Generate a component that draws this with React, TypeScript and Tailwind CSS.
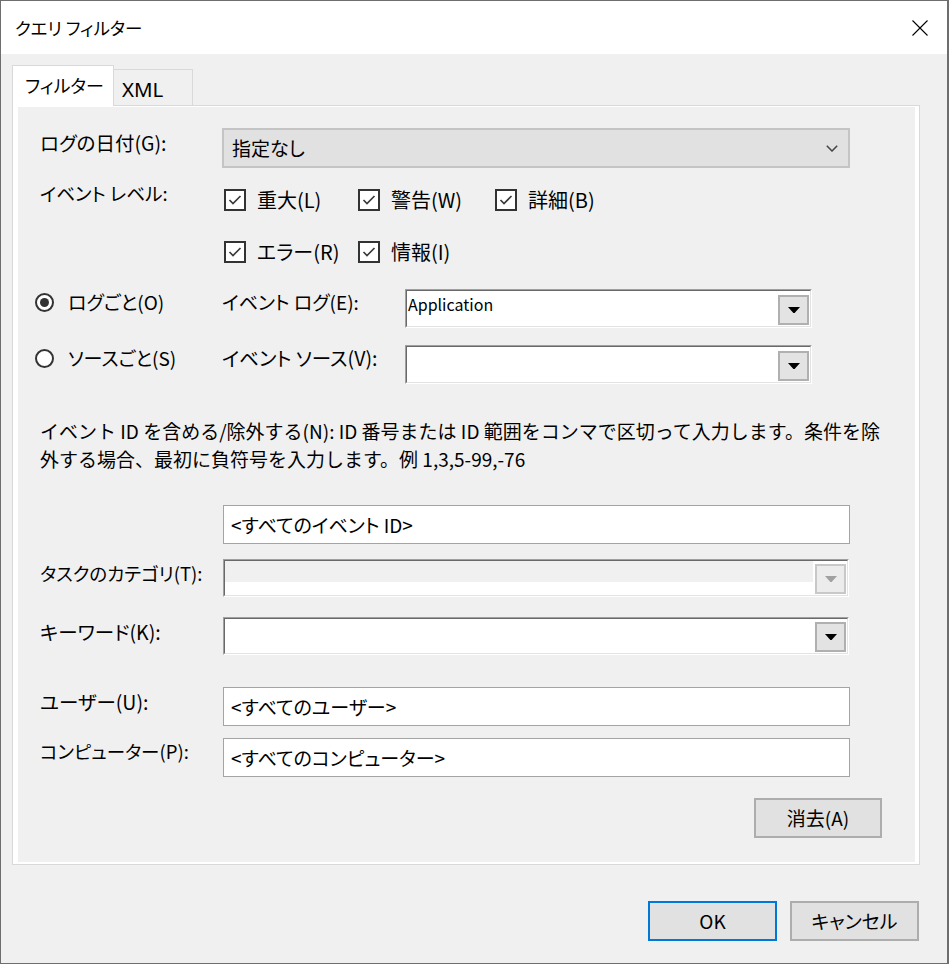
import React from "react";

const JP = "font-['Noto_Sans_CJK_JP',sans-serif] [font-feature-settings:'palt']";

function Arrow({ color }: { color: string }) {
  return (
    <svg width="12" height="6" viewBox="0 0 12 6">
      <polygon points="0,0 12,0 6.6,6 5.4,6" fill={color} />
    </svg>
  );
}

function Check({ label, className }: { label: string; className?: string }) {
  return (
    <div className={`flex items-center h-[24px] ${className ?? ""}`}>
      <div className="w-[22px] h-[22px] border-2 border-[#333333] bg-white flex items-center justify-center">
        <svg width="16" height="14" viewBox="0 0 16 14">
          <path d="M2.5 7 L6 10.5 L13.5 3" fill="none" stroke="#3a3a3a" strokeWidth="1.7" />
        </svg>
      </div>
      <span className="ml-[11px] text-[20px] leading-[24px] text-black whitespace-nowrap">{label}</span>
    </div>
  );
}

function Radio({ label, checked }: { label: string; checked?: boolean }) {
  return (
    <div className="flex items-center h-[26px] w-[187px] ml-[-5px]">
      <div className="w-[19px] h-[19px] rounded-full border-2 border-[#333333] bg-white flex items-center justify-center">
        {checked && <div className="w-[9px] h-[9px] rounded-full bg-[#333333]" />}
      </div>
      <span className="ml-[14px] text-[19px] leading-[26px] text-black whitespace-nowrap">{label}</span>
    </div>
  );
}

function ClassicCombo({
  value,
  className,
  disabled,
}: {
  value?: string;
  className?: string;
  disabled?: boolean;
}) {
  return (
    <div
      className={`border border-t-[#a0a0a0] border-l-[#a0a0a0] border-r-[#ffffff] border-b-[#ffffff] ${className ?? ""}`}
    >
      <div className="h-full border border-t-[#696969] border-l-[#696969] border-r-[#e3e3e3] border-b-[#e3e3e3] bg-white flex">
        <div className="flex-1 flex flex-col">
          {disabled ? (
            <div className="h-[21px] bg-[#f0f0f0] mr-[2px]" />
          ) : (
            <span className="mt-[2px] pl-[1px] text-[16px] leading-[22px] text-black font-['Noto_Sans_CJK_JP',sans-serif]">
              {value}
            </span>
          )}
        </div>
        <div className="flex items-end pb-[1px] pr-[1px]">
          <div
            className={`w-[31px] h-[30px] border-2 flex items-center justify-center ${
              disabled ? "border-[#c8c8c8] bg-[#ececec]" : "border-[#b0b0b0] bg-[#e3e3e3]"
            }`}
          >
            <Arrow color={disabled ? "#a0a0a0" : "#000000"} />
          </div>
        </div>
      </div>
    </div>
  );
}

function TextBox({ value }: { value: string }) {
  return (
    <div className="ml-[1px] w-[627px] h-[39px] border border-[#a4a4a4] bg-white flex items-center pl-[7px]">
      <span className="text-[19px] leading-[24px] text-black whitespace-nowrap">{value}</span>
    </div>
  );
}

function Btn({ label, primary, className }: { label: string; primary?: boolean; className?: string }) {
  return (
    <div
      className={`h-[40px] flex items-center justify-center bg-[#e1e1e1] border-2 ${
        primary ? "border-[#0078d7]" : "border-[#adadad]"
      } ${className ?? ""}`}
    >
      <span className="text-[19px] leading-[24px] text-black">{label}</span>
    </div>
  );
}

export default function App() {
  return (
    <div
      className={`w-[949px] h-[964px] border-l border-t border-b border-r-2 border-[#6e6e6e] bg-[#f0f0f0] flex flex-col ${JP}`}
    >
      {/* title bar */}
      <div className="h-[53px] bg-white flex items-center justify-between pl-[14px] pr-[19px]">
        <span className="text-[17.5px] leading-[24px] text-black">クエリ フィルター</span>
        <svg width="16" height="16" viewBox="0 0 16 16">
          <path d="M0.5 0.5 L15.5 15.5 M15.5 0.5 L0.5 15.5" stroke="#000" strokeWidth="1.1" />
        </svg>
      </div>

      {/* tabs */}
      <div className="mt-[11px] pl-[11px] flex items-end relative z-10">
        <div className="w-[102px] h-[41px] bg-white border border-b-0 border-[#d9d9d9] mb-[-1px] flex items-start pt-[7px] pl-[12px]">
          <span className="text-[18px] leading-[24px] text-black">フィルター</span>
        </div>
        <div className="w-[79px] h-[36px] bg-[#f0f0f0] border border-l-0 border-b-0 border-[#d9d9d9] flex items-start pt-[6px] pl-[8px]">
          <span className="text-[20.5px] leading-[26px] text-black font-['Noto_Sans',sans-serif]">XML</span>
        </div>
      </div>

      {/* panel */}
      <div className="ml-[11px] w-[908px] h-[760px] border border-[#d9d9d9] bg-white pl-[5px] pr-[4px] pt-[1px] pb-[2px]">
        <div className="h-full bg-[#f0f0f0] pl-[22px] flex flex-col text-black">
          {/* log date */}
          <div className="mt-[21px] flex items-start h-[40px]">
            <span className="w-[182px] mt-[3px] text-[19.5px] leading-[24px]">ログの日付(G):</span>
            <div className="w-[628px] h-[40px] border-2 border-[#c4c4c4] bg-[#e1e1e1] flex items-center justify-between pl-[8px] pr-[10px]">
              <span className="text-[19px] leading-[24px]">指定なし</span>
              <svg width="12" height="7" viewBox="0 0 12 7">
                <path d="M0.8 0.8 L6 6 L11.2 0.8" fill="none" stroke="#444" strokeWidth="1.5" />
              </svg>
            </div>
          </div>

          {/* event level */}
          <div className="mt-[13px] flex items-start">
            <span className="w-[184px] text-[18.5px] leading-[24px]">イベント レベル:</span>
            <div className="pt-[7px] flex flex-col">
              <div className="flex">
                <Check label="重大(L)" className="w-[134px]" />
                <Check label="警告(W)" className="w-[137px]" />
                <Check label="詳細(B)" />
              </div>
              <div className="flex mt-[28px]">
                <Check label="エラー(R)" className="w-[134px]" />
                <Check label="情報(I)" />
              </div>
            </div>
          </div>

          {/* by log */}
          <div className="mt-[25px] flex items-start">
            <Radio label="ログごと(O)" checked />
            <span className="w-[183px] text-[19px] leading-[26px] whitespace-nowrap">イベント ログ(E):</span>
            <ClassicCombo value="Application" className="w-[407px] h-[39px]" />
          </div>

          {/* by source */}
          <div className="mt-[17px] flex items-start">
            <Radio label="ソースごと(S)" />
            <span className="w-[183px] text-[19.5px] leading-[26px] whitespace-nowrap">イベント ソース(V):</span>
            <ClassicCombo className="w-[407px] h-[39px]" />
          </div>

          {/* description */}
          <div className="mt-[33px] text-[19px] leading-[28px] whitespace-nowrap [font-feature-settings:normal]">
            <div>イベント ID を含める/除外する(N): ID 番号または ID 範囲をコンマで区切って入力します。条件を除</div>
            <div>外する場合、最初に負符号を入力します。例 1,3,5-99,-76</div>
          </div>

          {/* id */}
          <div className="mt-[32px] flex">
            <div className="w-[182px]" />
            <TextBox value="<すべてのイベント ID>" />
          </div>

          {/* task category */}
          <div className="mt-[15px] flex items-start">
            <span className="w-[183px] mt-[2px] text-[18.5px] leading-[24px] whitespace-nowrap">タスクのカテゴリ(T):</span>
            <ClassicCombo disabled className="w-[626px] h-[38px]" />
          </div>

          {/* keyword */}
          <div className="mt-[20px] flex items-start">
            <span className="w-[183px] mt-[3px] text-[19.5px] leading-[24px]">キーワード(K):</span>
            <ClassicCombo className="w-[626px] h-[38px]" />
          </div>

          {/* user */}
          <div className="mt-[32px] flex items-start">
            <span className="w-[182px] mt-[3px] text-[19.5px] leading-[24px]">ユーザー(U):</span>
            <TextBox value="<すべてのユーザー>" />
          </div>

          {/* computer */}
          <div className="mt-[12px] flex items-start">
            <span className="w-[182px] mt-[1px] text-[18.5px] leading-[24px] whitespace-nowrap">コンピューター(P):</span>
            <TextBox value="<すべてのコンピューター>" />
          </div>

          {/* clear */}
          <div className="mt-[21px] flex justify-end pr-[33px]">
            <Btn label="消去(A)" className="w-[128px] h-[37px]" />
          </div>
        </div>
      </div>

      {/* dialog buttons */}
      <div className="mt-[36px] flex justify-end pr-[28px] gap-[13px]">
        <Btn label="OK" primary className="w-[129px]" />
        <Btn label="キャンセル" className="w-[129px]" />
      </div>
    </div>
  );
}
